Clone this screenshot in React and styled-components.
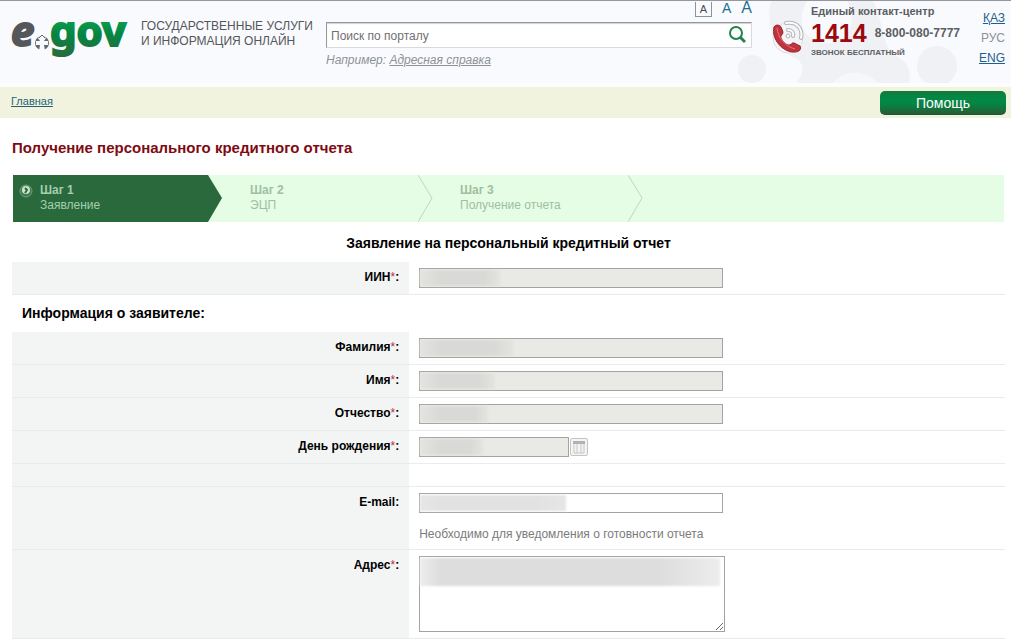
import React from "react";
import styled, { createGlobalStyle } from "styled-components";

const GlobalStyle = createGlobalStyle`
    * {
        box-sizing: border-box;
    }

    body {
        margin: 0;
        background: #ffffff;
        color: #000000;
        font-family: "Liberation Sans", Arial, sans-serif;
        font-size: 12px;
        line-height: 15px;
    }

    button, input, textarea {
        font-family: inherit;
    }
`;

const Header = styled.header`
    position: relative;
    display: flex;
    height: 87px;
    padding-left: 11px;
    padding-right: 6px;
    border-top: 1px solid #96979c;
    border-bottom: 4px solid #fdfdfe;
    background: #f9fafd;
    overflow: hidden;
`;

const Pattern = styled.svg`
    position: absolute;
    right: 46px;
    bottom: 0;
`;

const LogoLink = styled.a`
    width: 130px;
`;

const Slogan = styled.p`
    width: 185px;
    margin: 0;
    padding-top: 18px;
    color: #55565a;
    white-space: nowrap;
`;

const SearchColumn = styled.div`
    flex: 1;
`;

const FontSizes = styled.div`
    display: flex;
    justify-content: flex-end;
    align-items: baseline;
    gap: 10px;
    height: 21px;
`;

const FontSizeButton = styled.button`
    padding: 0;
    border: ${props => (props.$boxed ? "1px solid #8f9299" : "0")};
    border-top: 0;
    width: ${props => (props.$boxed ? "17px" : "auto")};
    background: none;
    color: ${props => (props.$boxed ? "#4c4d52" : "#22708f")};
    font-size: ${props => props.$size};
    line-height: 14px;
`;

const SearchForm = styled.form`
    display: flex;
    height: 26px;
    border: 1px solid #d9dade;
    border-top: 1px solid #97989b;
    border-left-color: #97989b;
    background: #ffffff;
    box-shadow: inset 0 1px 1px #d0d1d4;
`;

const SearchInput = styled.input`
    flex: 1;
    padding: 1px 4px 0;
    border: 0;
    background: none;
    font-size: 12px;

    &::placeholder {
        color: #6f7073;
        opacity: 1;
    }
`;

const SearchButton = styled.button`
    width: 28px;
    padding: 3px 0 0;
    border: 0;
    background: none;
`;

const Example = styled.p`
    margin: 5px 0 0;
    color: #8d9296;
    font-style: italic;

    a {
        color: #8d9296;
    }
`;

const Contacts = styled.div`
    position: relative;
    display: flex;
    width: 207px;
    margin-left: 19px;
`;

const PhoneIcon = styled.svg`
    flex: none;
    margin-top: 18px;
    margin-right: 6px;
`;

const ContactTitle = styled.div`
    padding-top: 3px;
    color: #5b5e62;
    font-size: 11px;
    font-weight: bold;
`;

const ContactPhones = styled.div`
    display: flex;
    align-items: center;
    gap: 8px;
    height: 28px;
    color: #5b5e62;
    font-weight: bold;
    white-space: nowrap;

    strong {
        color: #9b0a0f;
        font-size: 25px;
    }
`;

const ContactNote = styled.div`
    color: #5b5e62;
    font-size: 8px;
    font-weight: bold;
    line-height: 12px;
`;

const Languages = styled.nav`
    position: relative;
    display: flex;
    flex-direction: column;
    width: 27px;
    padding-top: 7px;
    text-align: right;
    line-height: 20px;

    a {
        color: #1d5f8f;
    }

    span {
        color: #8d9095;
    }
`;

const Crumbs = styled.div`
    display: flex;
    justify-content: space-between;
    height: 31px;
    padding: 4px 5px 0 11px;
    background: #f2f3df;

    a {
        padding-top: 3px;
        color: #1b6377;
        font-size: 11px;
    }
`;

const HelpButton = styled.button`
    width: 126px;
    height: 24px;
    padding: 0;
    border: 0;
    border-bottom: 1px solid #165c2f;
    border-radius: 5px;
    background: linear-gradient(#107a3d, #028a45 35%, #068242 60%, #2b5c36);
    color: #ffffff;
    font-size: 14px;
`;

const Main = styled.main`
    padding: 22px 6px 0 12px;
`;

const PageTitle = styled.h1`
    margin: 0;
    color: #7f0a12;
    font-size: 15px;
    line-height: 16px;
`;

const Steps = styled.ol`
    display: flex;
    height: 47px;
    margin: 19px 1px 0;
    padding: 0;
    background: #e4fde4;
    list-style: none;
`;

const Step = styled.li`
    display: flex;
    width: 210px;
    color: ${props => (props.$active ? "#a3cfae" : "#9fbfa3")};
`;

const StepBody = styled.div`
    display: flex;
    flex: 1;
    padding-top: 8px;
    background: ${props => (props.$active ? "#2a693c" : "none")};
`;

const StepMark = styled.div`
    width: 27px;
    padding: 1px 0 0 6px;
`;

const StepText = styled.div`
    strong {
        display: block;
    }
`;

const FormTitle = styled.h2`
    margin: 13px 0 10px;
    text-align: center;
    font-size: 14px;
    line-height: 17px;
`;

const GroupTitle = styled.h3`
    margin: 0;
    padding: 10px;
    font-size: 14px;
    line-height: 17px;
`;

const Row = styled.div`
    display: flex;
    min-height: 23px;
    border-bottom: 1px solid #e8ecec;
`;

const LabelCell = styled.div`
    width: 40%;
    padding: 8px 10px 0 0;
    background: #f3f5f5;
    font-weight: bold;
    text-align: right;
`;

const Required = styled.span`
    color: #c4293a;
    font-weight: normal;
`;

const FieldCell = styled.div`
    flex: 1;
    padding: 6px 10px;
`;

const FieldLine = styled.div`
    display: flex;
    align-items: center;
    gap: 1px;
`;

const Control = styled.div`
    position: relative;
    display: flex;
    width: ${props => props.$width};
    overflow: hidden;
`;

const TextInput = styled.input`
    width: 100%;
    height: 20px;
    padding: 0 4px;
    border: 1px solid #a3a3a3;
    background: #ffffff;

    &:disabled {
        background: #e9e9e5;
    }
`;

const TextArea = styled.textarea`
    width: 100%;
    height: 76px;
    border: 1px solid #a3a3a3;
    resize: vertical;
`;

const Smudge = styled.span`
    position: absolute;
    top: 2px;
    left: 1px;
    width: ${props => props.$width};
    height: ${props => (props.$tall ? "28px" : "16px")};
    background: linear-gradient(90deg, ${props => props.$end}, ${props => props.$color} 20px, ${props => props.$color} 80%, ${props => props.$end});
    filter: blur(1px);
    pointer-events: none;
`;

const CalendarButton = styled.button`
    width: 18px;
    height: 18px;
    padding: 0;
    border: 1px solid #c5c5c5;
    border-radius: 2px;
    background: #f4f4f4;
    line-height: 0;
`;

const Hint = styled.p`
    margin: 14px 0 1px;
    color: #7b7b7b;
`;

function Logo() {
    return (
        <svg width="122" height="64" viewBox="0 0 122 64" role="img" aria-label="e.gov">
            <defs>
                <linearGradient id="gov" x1="0" y1="0" x2="0" y2="1">
                    <stop offset="0.3" stopColor="#0ba04f" />
                    <stop offset="0.6" stopColor="#068443" />
                    <stop offset="1" stopColor="#2a6a3c" />
                </linearGradient>
            </defs>
            <g fontFamily="Noto Sans, sans-serif" fontSize="42" fontWeight="bold" strokeWidth="2">
                <text x="0" y="45" fill="#55575b" stroke="#55575b" fontStyle="italic">e</text>
                <text x="39" y="45" fill="url(#gov)" stroke="url(#gov)">gov</text>
            </g>
            <circle cx="31" cy="42" r="7" fill="#64676b" />
            <path d="M31 33 L35 37 L33 40 L37 40 L37 44 L33 44 L34 50 L28 50 L29 44 L25 44 L25 40 L29 40 L27 37 Z" fill="#f9fafd" />
            <path d="M28 37 L31 34 L34 37" fill="none" stroke="#64676b" />
        </svg>
    );
}

function HeaderPattern() {
    return (
        <Pattern width="230" height="82" viewBox="0 0 230 82" fill="#f0f1f4" aria-hidden="true">
            <circle cx="17" cy="68" r="14" />
            <circle cx="202" cy="65" r="20" />
            <path d="M36 0 C30 25 40 48 62 58 C72 65 66 74 62 82 H174 C177 70 172 60 160 54 C146 45 150 24 138 0 H112 C122 20 116 38 96 42 C72 44 58 24 72 0 Z" />
            <path d="M98 82 C110 68 128 68 144 82 Z" fill="#f6f7fa" />
        </Pattern>
    );
}

function Phone() {
    return (
        <PhoneIcon width="34" height="36" viewBox="0 0 34 36" aria-hidden="true">
            <circle cx="17" cy="19" r="15" fill="#f4f4f6" stroke="#dddee2" />
            <path d="M3 8 C5 5 9 6 10 8 L12 13 C12 16 9 16 10 19 C12 23 14 25 17 26 C20 27 21 23 23 24 L29 27 C31 30 28 33 24 33 C12 34 0 20 3 8 Z" fill="#c2343d" stroke="#96222c" />
            <path d="M6 9 C7 18 13 27 24 30" fill="none" stroke="#e0777c" strokeWidth="1" />
            <g fill="none" strokeLinecap="round">
                <g stroke="#b4b5ba" strokeWidth="4">
                    <path d="M17 11 C21 11 23 14 22 17" />
                    <path d="M15 4 C26 2 32 10 30 19" />
                </g>
                <g stroke="#fbfbfc" strokeWidth="2">
                    <path d="M17 11 C21 11 23 14 22 17" />
                    <path d="M15 4 C26 2 32 10 30 19" />
                </g>
            </g>
            <circle cx="17" cy="17" r="2" fill="#fbfbfc" stroke="#b4b5ba" />
        </PhoneIcon>
    );
}

function StepArrow({ active }) {
    return (
        <svg width="15" height="47" viewBox="0 0 15 47" aria-hidden="true">
            {active
                ? <path d="M0 0 L14 23 L0 47 Z" fill="#2a693c" />
                : <path d="M0 0 L14 23 L0 47" fill="none" stroke="#bcd8c0" />}
        </svg>
    );
}

const STEPS = [
    { title: "Шаг 1", name: "Заявление", active: true },
    { title: "Шаг 2", name: "ЭЦП" },
    { title: "Шаг 3", name: "Получение отчета" },
];

function FormRow({ id, label, required, children }) {
    return (
        <Row>
            <LabelCell>
                {label && (
                    <label htmlFor={id}>
                        {label}{required && <Required>*</Required>}:
                    </label>
                )}
            </LabelCell>
            <FieldCell>{children}</FieldCell>
        </Row>
    );
}

function LockedField({ id, label, smudge, width = "304px", children }) {
    return (
        <FormRow id={id} label={label} required>
            <FieldLine>
                <Control $width={width}>
                    <TextInput id={id} disabled />
                    <Smudge $width={smudge} $color="#d9d9d7" $end="#e3e3e0" />
                </Control>
                {children}
            </FieldLine>
        </FormRow>
    );
}

function App() {
    return (
        <>
            <GlobalStyle />
            <Header>
                <HeaderPattern />
                <LogoLink href="#"><Logo /></LogoLink>
                <Slogan>
                    ГОСУДАРСТВЕННЫЕ УСЛУГИ<br />
                    И ИНФОРМАЦИЯ ОНЛАЙН
                </Slogan>
                <SearchColumn>
                    <FontSizes>
                        <FontSizeButton $size="11px" $boxed>A</FontSizeButton>
                        <FontSizeButton $size="14px">A</FontSizeButton>
                        <FontSizeButton $size="16px">A</FontSizeButton>
                    </FontSizes>
                    <SearchForm>
                        <SearchInput placeholder="Поиск по порталу" aria-label="Поиск по порталу" />
                        <SearchButton type="button" aria-label="Найти">
                            <svg width="18" height="18" viewBox="0 0 18 18" fill="none" stroke="#21834e">
                                <circle cx="8" cy="7" r="6" strokeWidth="2" />
                                <path d="M12 11 L17 16" strokeWidth="3" />
                            </svg>
                        </SearchButton>
                    </SearchForm>
                    <Example>Например: <a href="#">Адресная справка</a></Example>
                </SearchColumn>
                <Contacts>
                    <Phone />
                    <div>
                        <ContactTitle>Единый контакт-центр</ContactTitle>
                        <ContactPhones><strong>1414</strong> 8-800-080-7777</ContactPhones>
                        <ContactNote>ЗВОНОК БЕСПЛАТНЫЙ</ContactNote>
                    </div>
                </Contacts>
                <Languages>
                    <a href="#">ҚАЗ</a>
                    <span>РУС</span>
                    <a href="#">ENG</a>
                </Languages>
            </Header>
            <Crumbs>
                <a href="#">Главная</a>
                <HelpButton>Помощь</HelpButton>
            </Crumbs>
            <Main>
                <PageTitle>Получение персонального кредитного отчета</PageTitle>
                <Steps>
                    {STEPS.map(step => (
                        <Step key={step.title} $active={step.active}>
                            <StepBody $active={step.active}>
                                <StepMark>
                                    {step.active && (
                                        <svg width="15" height="15" viewBox="0 0 15 15" aria-hidden="true">
                                            <circle cx="7" cy="7" r="6" fill="#3f7a50" stroke="#6fa27c" />
                                            <circle cx="7" cy="6" r="4" fill="#cfe5d4" />
                                            <path d="M6 4 L8 6 L6 9" fill="none" stroke="#2a693c" strokeWidth="2" />
                                        </svg>
                                    )}
                                </StepMark>
                                <StepText><strong>{step.title}</strong>{step.name}</StepText>
                            </StepBody>
                            <StepArrow active={step.active} />
                        </Step>
                    ))}
                </Steps>
                <form>
                    <FormTitle>Заявление на персональный кредитный отчет</FormTitle>
                    <LockedField id="iin" label="ИИН" smudge="80px" />
                    <GroupTitle>Информация о заявителе:</GroupTitle>
                    <LockedField id="surname" label="Фамилия" smudge="93px" />
                    <LockedField id="name" label="Имя" smudge="75px" />
                    <LockedField id="patronymic" label="Отчество" smudge="68px" />
                    <LockedField id="birthday" label="День рождения" smudge="63px" width="150px">
                        <CalendarButton type="button" aria-label="Календарь">
                            <svg width="14" height="14" viewBox="0 0 14 14">
                                <path d="M1 1 H13 V4 H1 Z" fill="#b2b2b2" />
                                <path d="M2 4 V13 H12 V4 M5 4 V13 M9 4 V13" fill="none" stroke="#c6c6c6" />
                            </svg>
                        </CalendarButton>
                    </LockedField>
                    <FormRow />
                    <FormRow id="email" label="E-mail">
                        <Control $width="304px">
                            <TextInput id="email" type="email" />
                            <Smudge $width="146px" $color="#e2e2e2" $end="#e6e6e6" />
                        </Control>
                        <Hint>Необходимо для уведомления о готовности отчета</Hint>
                    </FormRow>
                    <FormRow id="address" label="Адрес" required>
                        <Control $width="306px">
                            <TextArea id="address" />
                            <Smudge $width="300px" $color="#dddddd" $end="#ededed" $tall />
                        </Control>
                    </FormRow>
                </form>
            </Main>
        </>
    );
}

export default App;
